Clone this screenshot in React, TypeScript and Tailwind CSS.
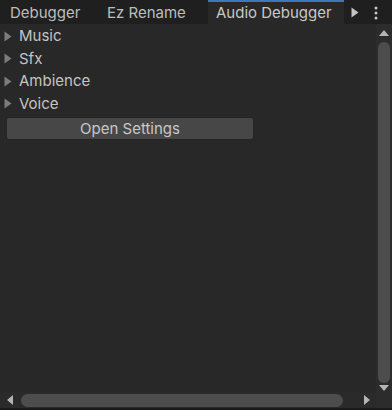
import React from "react";

const groups = ["Music", "Sfx", "Ambience", "Voice"];

function TriRight({ className }: { className?: string }) {
  return (
    <svg width="8" height="11" viewBox="0 0 8 11" className={className}>
      <path d="M0.5 0.5 L7.5 5.5 L0.5 10.5 Z" fill="currentColor" />
    </svg>
  );
}

export default function App() {
  return (
    <div
      className="flex h-[410px] w-[392px] flex-col overflow-hidden bg-[#282828] text-[15px] text-[#c4c4c4]"
      style={{ fontFamily: "Inter, 'Noto Sans', sans-serif" }}
    >
      {/* tab strip */}
      <div className="flex h-[24px] shrink-0 items-stretch bg-[#1f1f1f]">
        <div className="flex w-[90px] items-center pl-[10px] pt-[2px] text-[#bdbdbd]">Debugger</div>
        <div className="flex w-[118px] items-center pl-[17px] pt-[2px] text-[#bdbdbd]">Ez Rename</div>
        <div className="flex w-[136px] items-center border-t-2 border-[#3a79bb] bg-[#282828] pl-[8px] text-[#c8c8c8]">
          Audio Debugger
        </div>
        <div className="flex flex-1 items-center justify-between pl-[7px] pr-[14px] pt-[1px] text-[#c4c4c4]">
          <TriRight />
          <svg width="4" height="14" viewBox="0 0 4 14">
            <circle cx="2" cy="2" r="1.5" fill="currentColor" />
            <circle cx="2" cy="7" r="1.5" fill="currentColor" />
            <circle cx="2" cy="12" r="1.5" fill="currentColor" />
          </svg>
        </div>
      </div>

      <div className="flex min-h-0 flex-1">
        {/* content */}
        <div className="flex min-w-0 flex-1 flex-col">
          <div className="flex-1 pt-[1px]">
            {groups.map((g) => (
              <div key={g} className="flex h-[22.5px] items-center">
                <TriRight className="ml-[4px] mr-[7px] text-[#7c7c7c]" />
                <span>{g}</span>
              </div>
            ))}
            <button className="ml-[6px] mt-[2px] flex h-[23px] w-[248px] items-center justify-center rounded-[3px] border border-[#242424] bg-[#474747] pt-[1px] text-[#c8c8c8]">
              Open Settings
            </button>
          </div>
          {/* horizontal scrollbar */}
          <div className="flex h-[16px] shrink-0 items-center bg-[#2a2a2a]">
            <svg width="7" height="10" viewBox="0 0 7 10" className="ml-[7px] mr-[7px] text-[#b5b5b5]">
              <path d="M6 0 L0 5 L6 10 Z" fill="currentColor" />
            </svg>
            <div className="h-[13px] w-[322px] rounded-full bg-[#4d4d4d]" />
            <div className="flex-1" />
            <svg width="7" height="10" viewBox="0 0 7 10" className="mr-[6px] text-[#b5b5b5]">
              <path d="M1 0 L7 5 L1 10 Z" fill="currentColor" />
            </svg>
          </div>
        </div>
        {/* vertical scrollbar */}
        <div className="flex w-[16px] shrink-0 flex-col items-center bg-[#2c2c2c] pb-[16px] pt-[6px]">
          <svg width="10" height="7" viewBox="0 0 10 7" className="text-[#b5b5b5]">
            <path d="M0 6 L5 0 L10 6 Z" fill="currentColor" />
          </svg>
          <div className="mt-[5px] w-[12px] flex-1 rounded-full bg-[#4d4d4d]" />
          <svg width="10" height="7" viewBox="0 0 10 7" className="mt-[2px] text-[#b5b5b5]">
            <path d="M0 0 L10 0 L5 6 Z" fill="currentColor" />
          </svg>
        </div>
      </div>
      <div className="h-[2px] shrink-0 bg-[#1a1a1a]" />
    </div>
  );
}
